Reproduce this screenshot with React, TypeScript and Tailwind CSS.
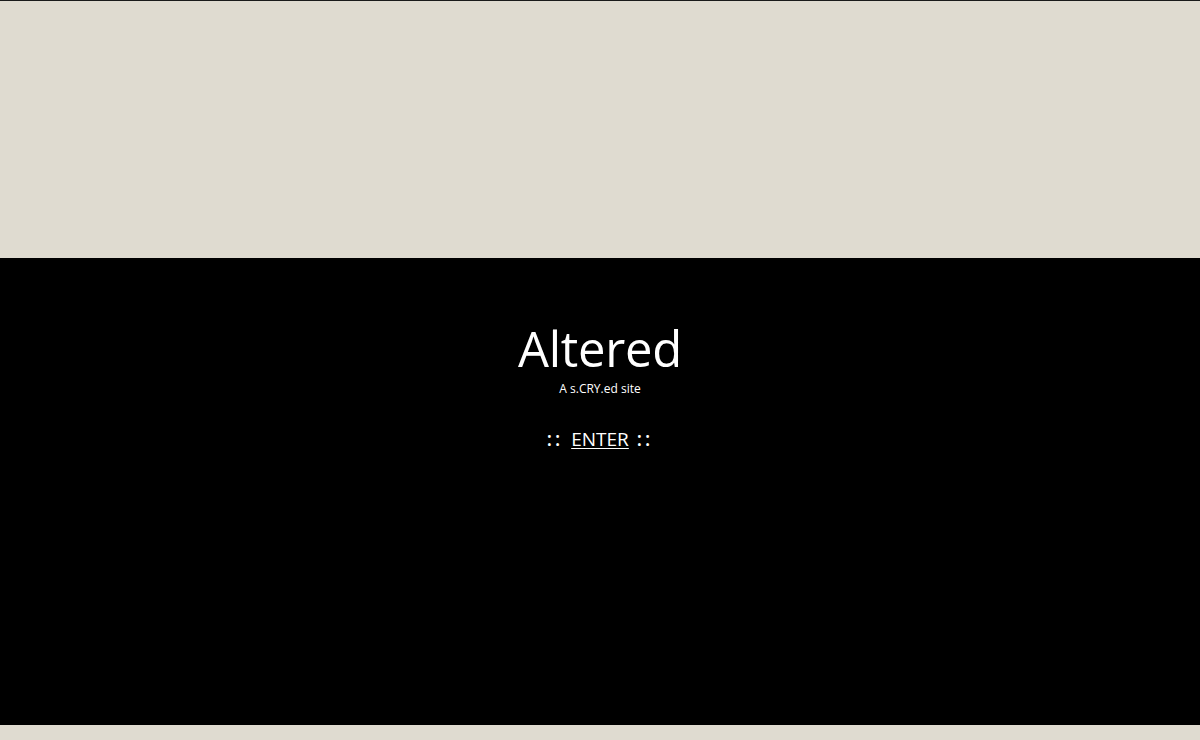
export default function App() {
  return (
    <div className="flex min-h-[740px] flex-col bg-[#dfdbd0] font-['Open_Sans','Noto_Sans',sans-serif]">
      <div className="h-px bg-[#1a1a1a]" />
      <div className="h-[257px]" />
      <main className="flex h-[467px] flex-col items-center bg-black text-white">
        <h1 className="mt-[62px] text-[49px] leading-[56px] tracking-[-0.3px]">Altered</h1>
        <p className="mt-[6px] text-[12px] leading-[14px]">A s.CRY.ed site</p>
        <p className="mt-[31px] flex items-baseline gap-[8px] text-[19px] leading-[24px]">
          <span className="font-semibold tracking-[3px]">::</span>
          <a href="#" className="underline underline-offset-2">
            ENTER
          </a>
          <span className="font-semibold tracking-[3px]">::</span>
        </p>
      </main>
    </div>
  )
}
